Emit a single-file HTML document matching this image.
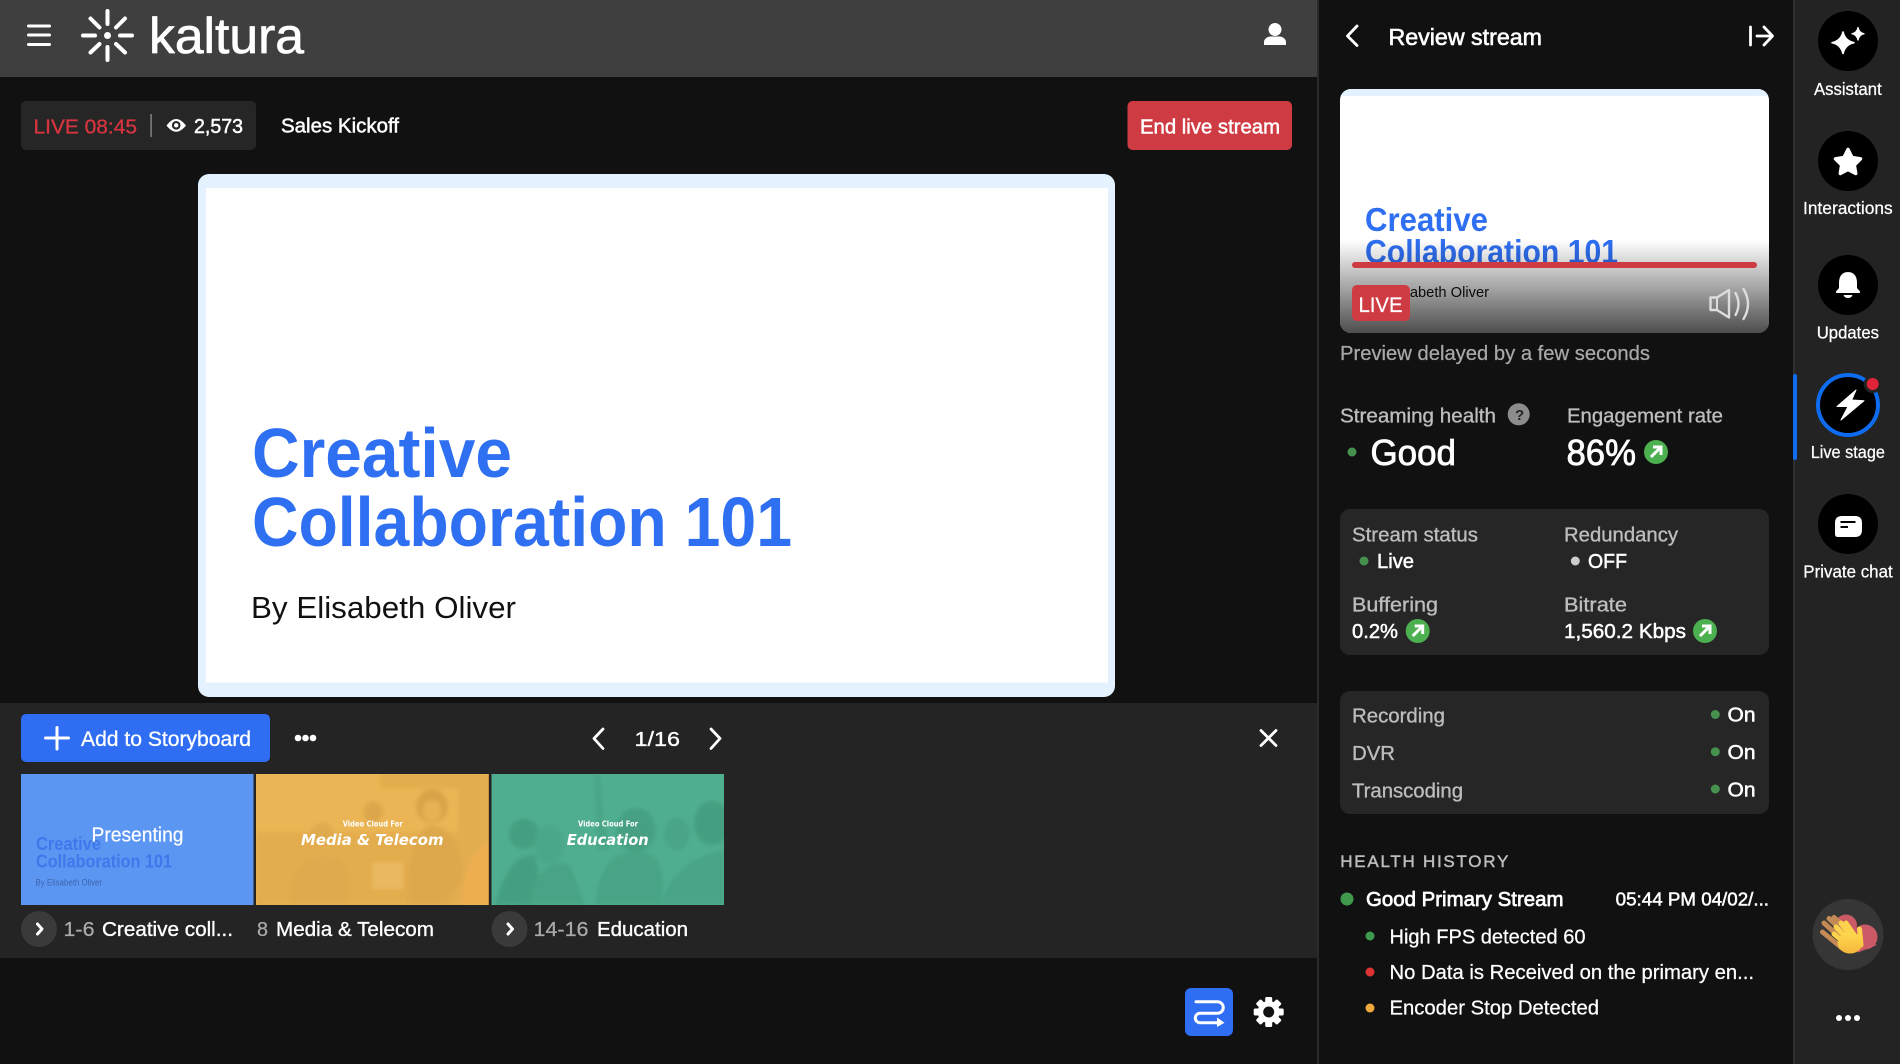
<!DOCTYPE html>
<html lang="en"><head><meta charset="utf-8"><title>Review stream</title>
<style>
html,body{margin:0;padding:0;background:#111;width:1900px;height:1064px;overflow:hidden}
svg{display:block}
text{font-family:"Liberation Sans",sans-serif;fill:#fff;font-size:20.6px;stroke:#fff;stroke-width:.25px}
.m{stroke:#fff;stroke-width:.5px}
.gm{fill:#bdbdbd;stroke:#bdbdbd;stroke-width:.35px}
.n{stroke:none}
.gr{fill:#aaa;stroke:#aaa;stroke-width:.25px}
.bl{font-weight:bold;fill:#2f6ff2;stroke:none}
.d{font-family:"DejaVu Sans","Liberation Sans",sans-serif;font-weight:bold;stroke:none}
</style></head><body>
<svg xmlns="http://www.w3.org/2000/svg" width="1900" height="1064" viewBox="0 0 1900 1064">
<defs>
<linearGradient id="pg" x1="0" y1="0" x2="0" y2="1"><stop offset="0" stop-color="#000" stop-opacity="0"/><stop offset=".55" stop-color="#000" stop-opacity=".38"/><stop offset="1" stop-color="#000" stop-opacity=".7"/></linearGradient>
<linearGradient id="hy" x1="0" y1="0" x2="0" y2="1"><stop offset="0" stop-color="#fdd94f"/><stop offset="1" stop-color="#f6b73c"/></linearGradient>
<clipPath id="pc"><rect x="1340" y="89" width="429" height="244" rx="11"/></clipPath>
<clipPath id="t2"><rect x="256" y="774" width="233" height="131"/></clipPath>
<clipPath id="t3"><rect x="491.5" y="774" width="232.5" height="131"/></clipPath>
<filter id="b" x="-5%" y="-5%" width="110%" height="110%"><feGaussianBlur stdDeviation="1.8"/></filter>
</defs>

<rect width="1900" height="1064" fill="#111"/>
<!-- header -->
<rect width="1317" height="77" fill="#3f3f3f"/>
<rect x="1317" width="2" height="1064" fill="#2a2a2a"/>
<rect x="27" y="24.5" width="24" height="3" rx="1.5" fill="#fff"/><rect x="27" y="33.5" width="24" height="3" rx="1.5" fill="#fff"/><rect x="27" y="43" width="24" height="3" rx="1.5" fill="#fff"/>
<g stroke="#fff" stroke-width="4" stroke-linecap="round" fill="none">
<path d="M107.5 11V24M107.5 47V60M83 35.5H95M120 35.5H132M90.5 18.5L99.5 27.5M125 18.5L116 27.5M90.5 52.5L99.5 44M125 52.5L116 44"/>
</g><circle cx="107.5" cy="35.5" r="3.5" fill="#fff"/>
<text x="149" y="53" textLength="155" lengthAdjust="spacingAndGlyphs" style="font-size:50px;stroke-width:.7px;stroke-linejoin:round">kaltura</text>
<path d="M1275 23a6.5 6.5 0 1 1-.01 0zM1264 45v-3c0-3 3-5 6-5.5h10c3 .5 6 2.5 6 5.5v3z" fill="#fff"/>

<!-- live pill -->
<rect x="21" y="101" width="235" height="49" rx="5" fill="#262626"/>
<text x="33.5" y="133.5" textLength="103.5" lengthAdjust="spacingAndGlyphs" style="fill:#d6343f;stroke:#d6343f;stroke-width:.35px">LIVE 08:45</text>
<rect x="150.5" y="114" width="1.2" height="23" fill="#999"/>
<path d="M166.5 125.5Q176 112.5 186 125.5Q176 138 166.5 125.5z" fill="#fff"/><circle cx="176.2" cy="125.3" r="4.3" fill="#262626"/><circle cx="176.2" cy="125.3" r="2.2" fill="#fff"/>
<text x="194" y="133" textLength="49" lengthAdjust="spacingAndGlyphs" class="m">2,573</text>
<text x="281" y="132.5" textLength="118" lengthAdjust="spacingAndGlyphs" class="m">Sales Kickoff</text>
<rect x="1127.5" y="101" width="164.5" height="49" rx="5" fill="#cf3b43"/>
<text x="1140" y="133.5" textLength="140" lengthAdjust="spacingAndGlyphs" class="m">End live stream</text>

<!-- slide -->
<rect x="198" y="174" width="917" height="523" rx="11" fill="#e3f2fe"/>
<rect x="206" y="188" width="902" height="494.5" fill="#fff"/>
<text x="252" y="477" textLength="260" lengthAdjust="spacingAndGlyphs" class="bl" style="font-size:70px">Creative</text>
<text x="252" y="546" textLength="540" lengthAdjust="spacingAndGlyphs" class="bl" style="font-size:70px">Collaboration 101</text>
<text x="251" y="618" textLength="265" lengthAdjust="spacingAndGlyphs" class="n" style="font-size:31px;fill:#111">By Elisabeth Oliver</text>

<!-- storyboard -->
<rect y="703" width="1317" height="255" fill="#242424"/>
<rect x="21" y="714" width="249" height="48" rx="5" fill="#2f6ef3"/>
<path d="M57 727.5V749M45.5 738H68.5" stroke="#fff" stroke-width="3" stroke-linecap="round"/>
<text x="81" y="746" textLength="170" lengthAdjust="spacingAndGlyphs" class="m" style="font-size:21px;stroke-width:.3px">Add to Storyboard</text>
<circle cx="298" cy="738" r="3.3" fill="#fff"/><circle cx="305.5" cy="738" r="3.3" fill="#fff"/><circle cx="313" cy="738" r="3.3" fill="#fff"/>
<path d="M603 729L594 738.5L603 748.5M711 729L720 738.5L711 748.5" stroke="#fff" stroke-width="2.8" fill="none" stroke-linecap="round" stroke-linejoin="round"/>
<text x="634.5" y="746" textLength="45.5" lengthAdjust="spacingAndGlyphs" class="m" style="stroke-width:.35px">1/16</text>
<path d="M1261 730.5L1276 745.5M1276 730.5L1261 745.5" stroke="#fff" stroke-width="2.8" stroke-linecap="round"/>

<!-- thumb 1 -->
<rect x="21" y="774" width="232.5" height="131" fill="#5b96f3"/>
<text x="36" y="850" textLength="65" lengthAdjust="spacingAndGlyphs" class="n" style="font-size:18px;font-weight:bold;fill:#3f78ea">Creative</text>
<text x="36" y="867.5" textLength="136" lengthAdjust="spacingAndGlyphs" class="n" style="font-size:18px;font-weight:bold;fill:#3f78ea">Collaboration 101</text>
<text x="35.5" y="885.5" textLength="66.5" lengthAdjust="spacingAndGlyphs" class="n" style="font-size:9px;fill:#3e64ad">By Elisabeth Oliver</text>
<text x="91.5" y="841.7" textLength="92" lengthAdjust="spacingAndGlyphs" style="stroke-width:.2px">Presenting</text>

<!-- thumb 2 -->
<rect x="256" y="774" width="233" height="131" fill="#ebb555"/>
<g clip-path="url(#t2)">
<g filter="url(#b)" opacity=".4">
<rect x="380" y="774" width="78" height="14" fill="#d8a044"/>
<rect x="458" y="774" width="31" height="60" fill="#d8a044"/>
<rect x="256" y="832" width="235" height="73" fill="#d9a244"/>
<ellipse cx="432" cy="806" rx="16" ry="17" fill="#c08c38"/>
<ellipse cx="432" cy="811" rx="9" ry="10" fill="#e5ae52"/>
<path d="M408 905C406 860 415 830 430 826C450 824 465 850 462 880L445 905z" fill="#c9953e"/>
<ellipse cx="373" cy="812" rx="10" ry="11" fill="#c8943f"/>
<ellipse cx="322" cy="834" rx="12" ry="11" fill="#cf9a42"/>
<path d="M290 905C290 870 300 855 330 856C350 858 352 880 348 905z" fill="#cf9a42"/>
<path d="M462 905C462 870 475 850 489 842V905z" fill="#f0a64a"/>
</g>
<rect x="372" y="862" width="31" height="27" fill="#f0c06c" opacity=".6" filter="url(#b)"/>
</g>
<rect x="488" y="774" width="1" height="131" fill="#c8923a"/>
<text class="d" x="342.7" y="826.7" textLength="60" lengthAdjust="spacingAndGlyphs" style="font-size:8px">Video Cloud For</text>
<text class="d" x="301" y="845" textLength="142.5" lengthAdjust="spacingAndGlyphs" style="font-size:15.5px;font-style:italic">Media &amp; Telecom</text>

<!-- thumb 3 -->
<rect x="491.5" y="774" width="232.5" height="131" fill="#50ae90"/>
<g clip-path="url(#t3)"><g filter="url(#b)" opacity=".36">
<ellipse cx="636" cy="830" rx="20" ry="22" fill="#378a6e"/>
<path d="M596 905C598 865 615 850 640 852C665 855 665 880 660 905z" fill="#3c9174"/>
<path d="M594 776L600 774L603 815L610 850L598 850z" fill="#3f9578"/>
<ellipse cx="712" cy="823" rx="18" ry="22" fill="#338468"/>
<path d="M660 905C670 870 695 855 724 850V905z" fill="#3f9578"/>
<ellipse cx="524" cy="834" rx="15" ry="15" fill="#338468"/>
<path d="M495 905C505 870 515 855 535 855L545 905z" fill="#338468"/>
<ellipse cx="549" cy="845" rx="15" ry="20" fill="#439c7e"/>
<path d="M530 905C535 870 550 860 570 865L585 905z" fill="#3c9174"/>
<ellipse cx="677" cy="834" rx="13" ry="16" fill="#3f9578"/>
</g></g>
<text class="d" x="578" y="826.7" textLength="60" lengthAdjust="spacingAndGlyphs" style="font-size:8px">Video Cloud For</text>
<text class="d" x="566.7" y="845" textLength="82" lengthAdjust="spacingAndGlyphs" style="font-size:15.5px;font-style:italic">Education</text>

<!-- thumb labels -->
<circle cx="39" cy="929" r="18" fill="#3a3a3a"/>
<path d="M37.5 924L42 929L37.5 934" stroke="#fff" stroke-width="3" fill="none" stroke-linecap="round" stroke-linejoin="round"/>
<text x="63.5" y="936" textLength="31" lengthAdjust="spacingAndGlyphs" class="gr">1-6</text>
<text x="102" y="936" textLength="131" lengthAdjust="spacingAndGlyphs" class="m" style="stroke-width:.35px">Creative coll...</text>
<text x="257" y="936" textLength="11" lengthAdjust="spacingAndGlyphs" class="gr">8</text>
<text x="276" y="936" textLength="158" lengthAdjust="spacingAndGlyphs" class="m" style="stroke-width:.35px">Media &amp; Telecom</text>
<circle cx="509.5" cy="929" r="18" fill="#3a3a3a"/>
<path d="M508 924L512.5 929L508 934" stroke="#fff" stroke-width="3" fill="none" stroke-linecap="round" stroke-linejoin="round"/>
<text x="533.5" y="936" textLength="55" lengthAdjust="spacingAndGlyphs" class="gr">14-16</text>
<text x="597" y="936" textLength="91" lengthAdjust="spacingAndGlyphs" class="m" style="stroke-width:.35px">Education</text>

<!-- bottom right icons -->
<rect x="1185" y="988" width="48" height="48" rx="6" fill="#2f6ef3"/>
<path d="M1196 1001.7H1217.5A5.8 5.8 0 0 1 1217.5 1013.3H1200A4.7 4.7 0 0 0 1200 1022.7H1217" stroke="#fff" stroke-width="3" fill="none" stroke-linecap="round"/>
<path d="M1217 1017.5L1224.5 1022.7L1217 1027z" fill="#fff"/>
<g fill="#fff"><rect x="1265.2" y="997" width="7" height="30" rx="1.5"/><rect x="1265.2" y="997" width="7" height="30" rx="1.5" transform="rotate(45 1268.7 1012)"/><rect x="1265.2" y="997" width="7" height="30" rx="1.5" transform="rotate(90 1268.7 1012)"/><rect x="1265.2" y="997" width="7" height="30" rx="1.5" transform="rotate(135 1268.7 1012)"/></g>
<circle cx="1268.7" cy="1012" r="11" fill="#fff"/><circle cx="1268.7" cy="1012" r="5.5" fill="#111"/>

<!-- right panel -->
<path d="M1357 26L1347.5 36L1357 45.5" stroke="#fff" stroke-width="2.8" fill="none" stroke-linecap="round" stroke-linejoin="round"/>
<text x="1388.5" y="45" textLength="153.5" lengthAdjust="spacingAndGlyphs" class="m" style="font-size:23px;stroke-width:.6px">Review stream</text>
<path d="M1750.5 27V45M1757 36H1772M1764 27L1772.5 36L1764 45" stroke="#fff" stroke-width="2.8" fill="none" stroke-linecap="round" stroke-linejoin="round"/>

<g clip-path="url(#pc)">
<rect x="1340" y="89" width="429" height="244" fill="#fff"/>
<rect x="1340" y="89" width="429" height="7" fill="#e3f2fe"/>
<text x="1365" y="231" textLength="123" lengthAdjust="spacingAndGlyphs" class="bl" style="font-size:33px">Creative</text>
<text x="1365" y="263" textLength="253" lengthAdjust="spacingAndGlyphs" class="bl" style="font-size:33px">Collaboration 101</text>
<text x="1365" y="297" textLength="124" lengthAdjust="spacingAndGlyphs" class="n" style="font-size:15px;fill:#111">By Elisabeth Oliver</text>
<rect x="1340" y="240" width="429" height="93" fill="url(#pg)"/>
</g>
<rect x="1352" y="262" width="405" height="6" rx="3" fill="#cf3b43"/>
<rect x="1352" y="285" width="58" height="36" rx="5" fill="#cf3b43"/>
<text x="1358.5" y="312" textLength="44" lengthAdjust="spacingAndGlyphs" style="font-size:21px">LIVE</text>
<path d="M1710.5 297.5H1717L1729 290V317.5L1717 310H1710.5z" stroke="#ddd" stroke-width="2.4" fill="none" stroke-linejoin="round"/>
<path d="M1717 297.5V310" stroke="#ddd" stroke-width="2"/>
<path d="M1735.5 293Q1741.5 304 1735.5 315M1743.5 289Q1752.5 304 1743.5 319" stroke="#ddd" stroke-width="2.4" fill="none" stroke-linecap="round"/>
<text x="1340" y="360" textLength="310" lengthAdjust="spacingAndGlyphs" style="fill:#a8a8a8;stroke:#a8a8a8">Preview delayed by a few seconds</text>

<text x="1340" y="422.5" textLength="156" lengthAdjust="spacingAndGlyphs" class="gm">Streaming health</text>
<circle cx="1518.7" cy="414.3" r="11" fill="#8c8c8c"/>
<text x="1515" y="420" class="n" style="font-size:15px;font-weight:bold;fill:#222">?</text>
<text x="1567" y="422.5" textLength="156" lengthAdjust="spacingAndGlyphs" class="gm">Engagement rate</text>
<circle cx="1352" cy="452" r="4.5" fill="#47914e"/>
<text x="1370.5" y="465" textLength="85.5" lengthAdjust="spacingAndGlyphs" style="font-size:36px;stroke-width:.8px">Good</text>
<text x="1566.5" y="465" textLength="69.5" lengthAdjust="spacingAndGlyphs" style="font-size:36px;stroke-width:.8px">86%</text>
<circle cx="1656" cy="452" r="12" fill="#4caf50"/>
<path d="M1651 457L1660.5 447.5M1653 447H1661V455" stroke="#fff" stroke-width="3" fill="none"/>

<rect x="1340" y="509" width="429" height="146" rx="10" fill="#262626"/>
<text x="1352" y="541.5" textLength="126" lengthAdjust="spacingAndGlyphs" class="gm">Stream status</text>
<text x="1564" y="541.5" textLength="114" lengthAdjust="spacingAndGlyphs" class="gm">Redundancy</text>
<circle cx="1364" cy="561" r="4.5" fill="#47914e"/>
<text x="1377" y="568" textLength="37" lengthAdjust="spacingAndGlyphs" class="m">Live</text>
<circle cx="1575.3" cy="561" r="4.5" fill="#ccc"/>
<text x="1588" y="568" textLength="39" lengthAdjust="spacingAndGlyphs" class="m">OFF</text>
<text x="1352" y="611.5" textLength="86" lengthAdjust="spacingAndGlyphs" class="gm">Buffering</text>
<text x="1564" y="611.5" textLength="63" lengthAdjust="spacingAndGlyphs" class="gm">Bitrate</text>
<text x="1352" y="638" textLength="46" lengthAdjust="spacingAndGlyphs" class="m">0.2%</text>
<circle cx="1417.7" cy="631" r="12" fill="#4caf50"/>
<path d="M1412.7 636L1422.2 626.5M1414.7 626H1422.7V634" stroke="#fff" stroke-width="3" fill="none"/>
<text x="1564" y="638" textLength="122" lengthAdjust="spacingAndGlyphs" class="m">1,560.2 Kbps</text>
<circle cx="1705" cy="631" r="12" fill="#4caf50"/>
<path d="M1700 636L1709.5 626.5M1702 626H1710V634" stroke="#fff" stroke-width="3" fill="none"/>

<rect x="1340" y="691" width="429" height="123" rx="10" fill="#262626"/>
<text x="1352" y="722.5" textLength="93" lengthAdjust="spacingAndGlyphs" class="gm">Recording</text>
<text x="1352" y="760" textLength="43" lengthAdjust="spacingAndGlyphs" class="gm">DVR</text>
<text x="1352" y="797.3" textLength="111" lengthAdjust="spacingAndGlyphs" class="gm">Transcoding</text>
<circle cx="1715.3" cy="714.5" r="4.5" fill="#47914e"/><circle cx="1715.3" cy="751.7" r="4.5" fill="#47914e"/><circle cx="1715.3" cy="789" r="4.5" fill="#47914e"/>
<text x="1727.5" y="721.7" textLength="28" lengthAdjust="spacingAndGlyphs" class="m">On</text>
<text x="1727.5" y="759" textLength="28" lengthAdjust="spacingAndGlyphs" class="m">On</text>
<text x="1727.5" y="796.5" textLength="28" lengthAdjust="spacingAndGlyphs" class="m">On</text>

<text x="1340.3" y="867" textLength="168" lengthAdjust="spacing" class="gm" style="font-size:17px;stroke-width:.45px">HEALTH HISTORY</text>
<circle cx="1347" cy="899" r="6.5" fill="#3f9a4e"/>
<text x="1366" y="906" textLength="197.5" lengthAdjust="spacingAndGlyphs" class="m" style="stroke-width:.7px">Good Primary Stream</text>
<text x="1615.7" y="905.5" textLength="153.3" lengthAdjust="spacingAndGlyphs" class="m" style="font-size:18px">05:44 PM 04/02/...</text>
<circle cx="1370" cy="936" r="4.5" fill="#3f9a4e"/>
<text x="1389.5" y="943.5" textLength="196" lengthAdjust="spacingAndGlyphs">High FPS detected 60</text>
<circle cx="1370" cy="972" r="4.5" fill="#d33"/>
<text x="1389.5" y="979.2" textLength="364.5" lengthAdjust="spacingAndGlyphs">No Data is Received on the primary en...</text>
<circle cx="1370" cy="1008" r="4.5" fill="#efa93c"/>
<text x="1389.5" y="1014.7" textLength="209.5" lengthAdjust="spacingAndGlyphs">Encoder Stop Detected</text>

<!-- sidebar -->
<rect x="1793" width="107" height="1064" fill="#232323"/>
<rect x="1793" width="2" height="1064" fill="#303030"/>
<rect x="1793" y="374" width="4" height="86" rx="2" fill="#0e6cf0"/>

<circle cx="1848" cy="41" r="30" fill="#000"/>
<path d="M1843 31.5Q1845 41 1854.5 42.7Q1845 44.5 1843 54Q1841 44.5 1831.5 42.7Q1841 41 1843 31.5z" fill="#fff" stroke="#fff" stroke-width="1.5"/>
<path d="M1858 27Q1859 33 1864.5 33.7Q1859 34.5 1858 40.5Q1857 34.5 1851.5 33.7Q1857 33 1858 27z" fill="#fff" stroke="#fff" stroke-width="1"/>
<text x="1814" y="95" textLength="67.7" lengthAdjust="spacingAndGlyphs" style="font-size:17.5px">Assistant</text>

<circle cx="1848" cy="161" r="30" fill="#000"/>
<path d="M1848 149.5L1852 157.5L1860.5 158.8L1854.3 165L1855.7 173.5L1848 169.5L1840.3 173.5L1841.7 165L1835.5 158.8L1844 157.5z" fill="#fff" stroke="#fff" stroke-width="3.5" stroke-linejoin="round"/>
<text x="1803" y="214" textLength="89.7" lengthAdjust="spacingAndGlyphs" style="font-size:17.5px">Interactions</text>

<circle cx="1848" cy="285" r="30" fill="#000"/>
<path d="M1848 272c-6 0-9 4.5-9 10.5v5.5l-3 3.5q-.5 1.5 1 1.5h22q1.5 0 1-1.5l-3-3.5v-5.5c0-6-3-10.5-9-10.5z" fill="#fff"/>
<path d="M1843.5 295h9q-1 3-4.5 3t-4.5-3z" fill="#fff"/>
<text x="1816.7" y="338.3" textLength="62.3" lengthAdjust="spacingAndGlyphs" style="font-size:17.5px">Updates</text>

<circle cx="1848" cy="405" r="30" fill="#000" stroke="#0e6cf0" stroke-width="4"/>
<path d="M1856 390L1837 406.5H1848L1841 420L1864 400.7L1851.7 400z" fill="#fff" stroke="#fff" stroke-width="1" stroke-linejoin="round"/>
<circle cx="1872.7" cy="384" r="9" fill="#232323"/><circle cx="1872.7" cy="384" r="6" fill="#e0243a"/>
<text x="1810.7" y="458" textLength="74.3" lengthAdjust="spacingAndGlyphs" style="font-size:17.5px">Live stage</text>

<circle cx="1848" cy="524" r="30" fill="#000"/>
<path d="M1842 516H1855Q1862 516 1862 523V530Q1862 537 1855 537H1838Q1835 537 1835 534V523Q1835 516 1842 516z" fill="#fff"/>
<path d="M1840.5 522H1855.5M1840.5 527H1848" stroke="#000" stroke-width="2"/>
<text x="1803.3" y="577.5" textLength="89.4" lengthAdjust="spacingAndGlyphs" style="font-size:17.5px">Private chat</text>

<circle cx="1848" cy="934.5" r="35.5" fill="#363636"/>
<g fill="#cb5a66"><circle cx="1846" cy="925.5" r="11"/><circle cx="1865" cy="937" r="12.5"/><path d="M1838 930L1877 945L1858 952.5L1846 945z"/></g>
<g stroke="#c48a55" stroke-width="5" stroke-linecap="round" fill="none"><path d="M1824 923L1846 943M1822.5 932L1842 948M1829 918.5L1850 938M1834 917.5L1853 934"/></g>
<path d="M1832 930L1850 926L1852 946L1842 947z" fill="#c48a55"/>
<g stroke="#fcd34c" stroke-width="5" stroke-linecap="round" fill="none"><path d="M1834 934L1848 946M1836 927L1851 943M1841 923L1854 941M1846 923L1857 939M1859.5 929L1861 945"/></g>
<ellipse cx="1850" cy="943" rx="12.5" ry="10.5" fill="url(#hy)"/>
<circle cx="1839" cy="1018" r="3" fill="#fff"/><circle cx="1848" cy="1018" r="3" fill="#fff"/><circle cx="1857" cy="1018" r="3" fill="#fff"/>
</svg>
</body></html>
